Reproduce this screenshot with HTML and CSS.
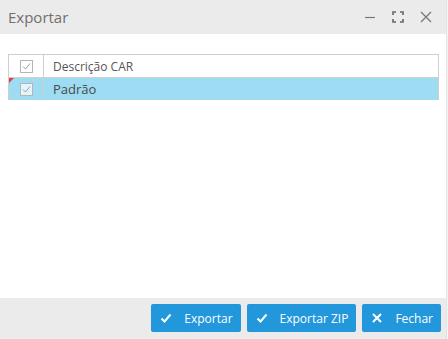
FILE: index.html
```html
<!DOCTYPE html>
<html>
<head>
<meta charset="utf-8">
<link rel="stylesheet" href="styles.css">
</head>
<body>
<div class="dialog">
  <div class="titlebar">
    <span class="title">Exportar</span>
    <div class="actions">
      <svg class="act" width="12" height="12" viewBox="0 0 12 12"><path d="M1 6.5h10" stroke="#777" stroke-width="1.2" fill="none"/></svg>
      <svg class="act" width="12" height="12" viewBox="0 0 12 12"><path d="M1 4V1h3M8 1h3v3M11 8v3H8M4 11H1V8" stroke="#666" stroke-width="1.6" fill="none"/></svg>
      <svg class="act" width="12" height="12" viewBox="0 0 12 12"><path d="M1 1l10 10M11 1L1 11" stroke="#777" stroke-width="1.3" fill="none"/></svg>
    </div>
  </div>
  <div class="content">
    <div class="grid">
      <div class="row head">
        <div class="cell check"><span class="cb"><svg width="13" height="13" viewBox="0 0 13 13"><rect x="0.5" y="0.5" width="12" height="12" fill="#fff" stroke="#b5b5b5"/><path d="M3 6.5l2.5 2.5 4.5-5.5" stroke="#a0a0a0" fill="none"/></svg></span></div>
        <div class="cell text">Descrição CAR</div>
      </div>
      <div class="row sel">
        <div class="cell check dirty"><span class="cb"><svg width="13" height="13" viewBox="0 0 13 13"><rect x="0.5" y="0.5" width="12" height="12" fill="#e3f5fc" stroke="#b5b5b5"/><path d="M3 6.5l2.5 2.5 4.5-5.5" stroke="#a0a0a0" fill="none"/></svg></span></div>
        <div class="cell text">Padrão</div>
      </div>
    </div>
  </div>
  <div class="footer">
    <button class="btn"><svg width="12" height="12" viewBox="0 0 12 12"><path d="M1.5 6.5l3 3 6-7" stroke="#fff" stroke-width="2" fill="none"/></svg><span>Exportar</span></button>
    <button class="btn"><svg width="12" height="12" viewBox="0 0 12 12"><path d="M1.5 6.5l3 3 6-7" stroke="#fff" stroke-width="2" fill="none"/></svg><span>Exportar ZIP</span></button>
    <button class="btn"><svg width="12" height="12" viewBox="0 0 12 12"><path d="M2 2l8 8M10 2l-8 8" stroke="#fff" stroke-width="2" fill="none"/></svg><span>Fechar</span></button>
  </div>
</div>
</body>
</html>
```

FILE: styles.css
```css
html, body {
  margin: 0;
  padding: 0;
  background: #f4f4f4;
  font-family: "Open Sans", "Noto Sans", sans-serif;
}
.dialog {
  width: 446px;
  height: 339px;
  background: #fff;
  border-right: 1px solid #e4e4e4;
  display: flex;
  flex-direction: column;
}
.titlebar {
  height: 34px;
  background: #ebebeb;
  display: flex;
  align-items: center;
  justify-content: space-between;
  padding: 0 14px 0 8px;
  flex-shrink: 0;
}
.title {
  font-size: 15px;
  color: #6f6f6f;
  margin-top: -1px;
}
.actions {
  display: flex;
  align-items: center;
  gap: 16px;
}
.act {
  display: block;
}
.content {
  flex: 1;
  padding: 20px 7px 0 8px;
}
.grid {
  border: 1px solid #cfcfcf;
  border-bottom: none;
}
.row {
  display: flex;
  height: 22px;
}
.row.head {
  height: 22px;
  border-bottom: 1px solid #cfcfcf;
}
.row.sel {
  background: #9ddcf3;
}
.cell {
  display: flex;
  align-items: center;
  font-size: 12px;
  color: #555;
}
.cell.check {
  width: 34px;
  border-right: 1px solid #cfcfcf;
  justify-content: center;
  position: relative;
}
.cell.dirty::before {
  content: "";
  position: absolute;
  left: 0;
  top: 0;
  border-top: 5px solid #e0413a;
  border-right: 5px solid transparent;
}
.cb svg {
  display: block;
}
.cell.text {
  padding-left: 9px;
}
.row.sel .cell.text {
  font-size: 13px;
  color: #4a4a4a;
}
.footer {
  height: 41px;
  background: #ebebeb;
  display: flex;
  justify-content: flex-end;
  align-items: flex-start;
  gap: 6px;
  padding: 6px 5px 0 0;
  box-sizing: border-box;
  flex-shrink: 0;
}
.btn {
  height: 28px;
  border: none;
  border-radius: 2px;
  background: #2297db;
  color: #fff;
  font-family: "Open Sans", "Noto Sans", sans-serif;
  font-size: 12px;
  display: flex;
  align-items: center;
  gap: 12px;
  padding: 0 8px 0 9px;
}
.btn svg {
  display: block;
}
```
